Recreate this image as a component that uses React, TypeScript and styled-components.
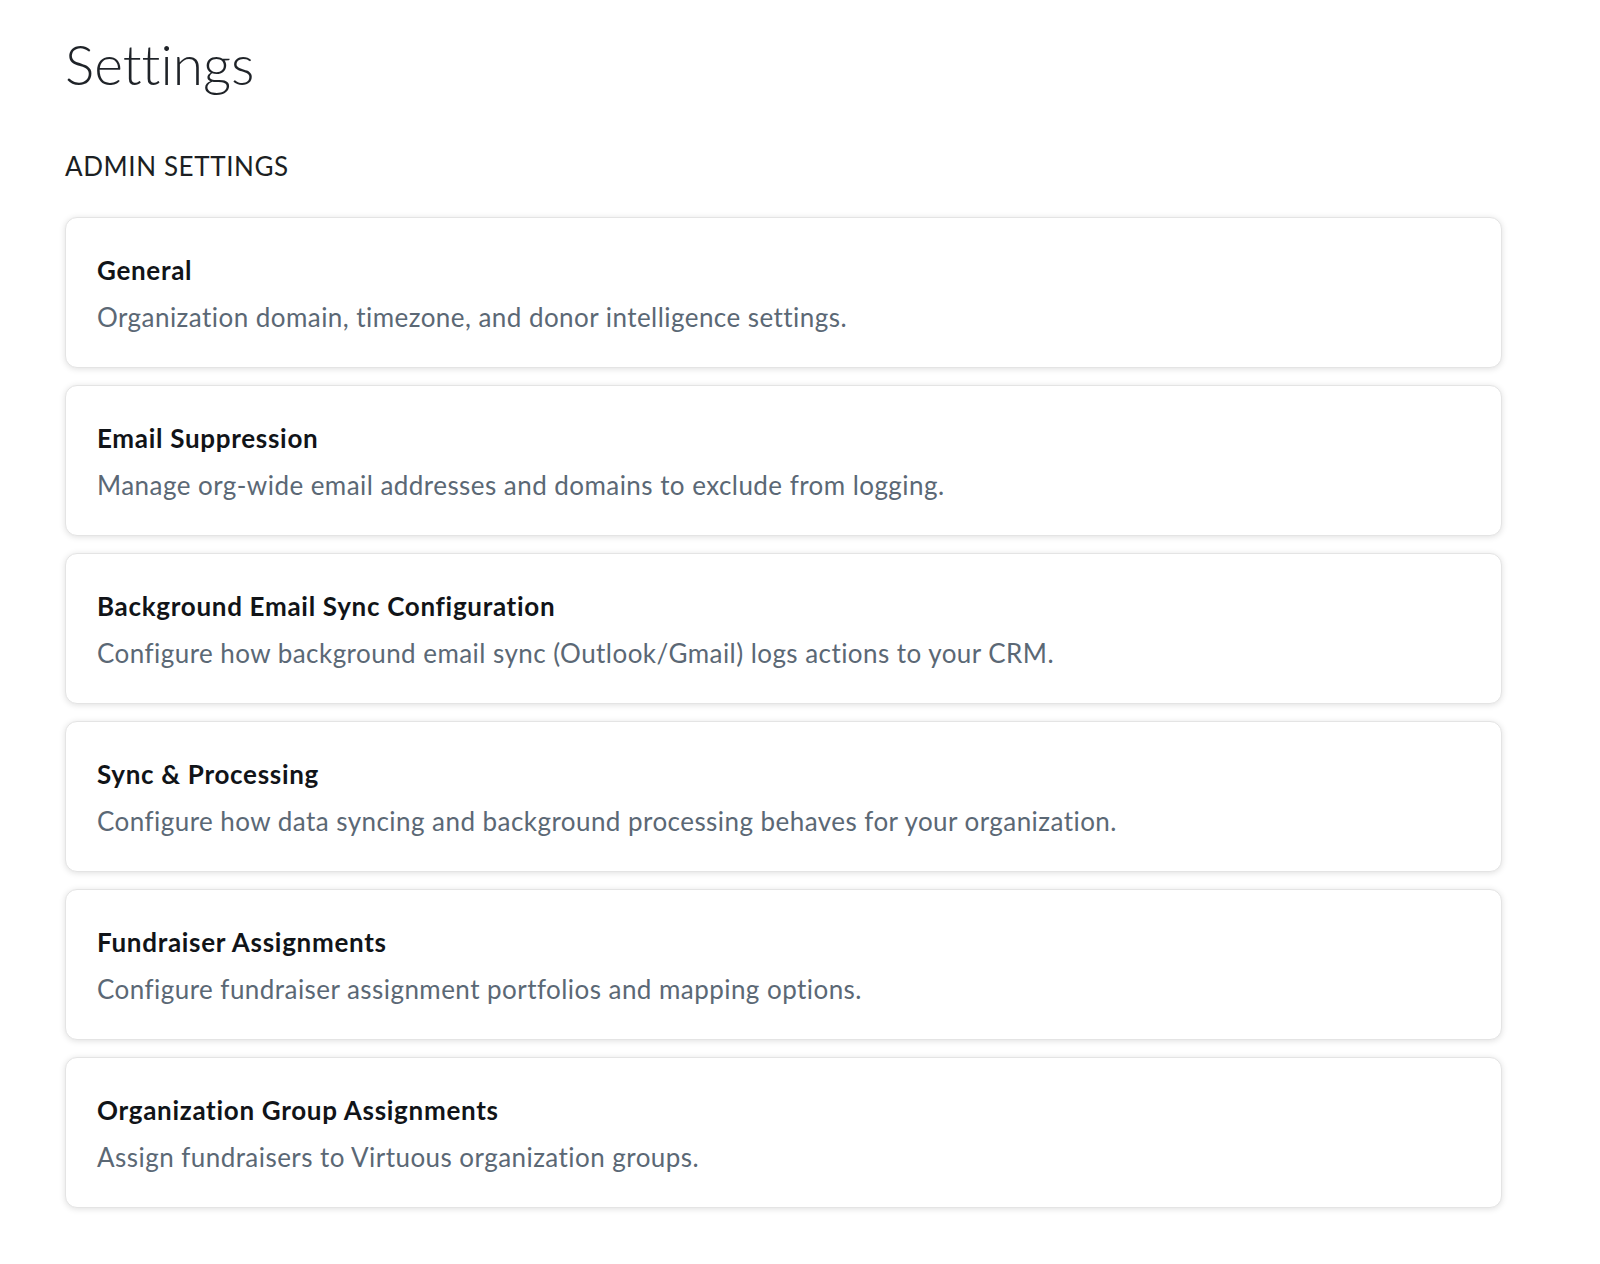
import styled, { createGlobalStyle } from 'styled-components';

const GlobalStyle = createGlobalStyle`
  html, body {
    margin: 0;
    padding: 0;
    background: #ffffff;
    font-family: Lato, "Noto Sans", sans-serif;
    font-variant-ligatures: none;
  }
`

const Page = styled.main`
  padding: 26px 98px 40px 65px;
  display: flex;
  flex-direction: column;
`
const Title = styled.h1`
  margin: 0;
  font-size: 55px;
  font-weight: 300;
  line-height: 76px;
  color: #1f2328;
`
const SectionLabel = styled.h2`
  margin: 48px 0 0;
  font-size: 26px;
  font-weight: 400;
  line-height: 32px;
  color: #1c1f23;
  letter-spacing: 0.6px;
`
const CardList = styled.div`
  display: flex;
  flex-direction: column;
  gap: 17px;
  margin-top: 35px;
`
const Card = styled.a`
  display: flex;
  flex-direction: column;
  gap: 11px;
  height: 151px;
  box-sizing: border-box;
  padding: 34px 31px 0;
  background: #ffffff;
  border: 1px solid #e4e4e4;
  border-radius: 12px;
  box-shadow: 0 1px 6px rgba(0, 0, 0, 0.13);
  text-decoration: none;
  cursor: pointer;
`
const CardTitle = styled.div`
  font-size: 26px;
  font-weight: 700;
  line-height: 36px;
  letter-spacing: 0.7px;
  color: #111418;
`
const CardText = styled.div`
  font-size: 26px;
  font-weight: 400;
  line-height: 36px;
  letter-spacing: 0.45px;
  color: #5b6875;
`

const items = [
  { title: 'General', text: 'Organization domain, timezone, and donor intelligence settings.' },
  { title: 'Email Suppression', text: 'Manage org-wide email addresses and domains to exclude from logging.' },
  { title: 'Background Email Sync Configuration', text: 'Configure how background email sync (Outlook/Gmail) logs actions to your CRM.' },
  { title: 'Sync & Processing', text: 'Configure how data syncing and background processing behaves for your organization.' },
  { title: 'Fundraiser Assignments', text: 'Configure fundraiser assignment portfolios and mapping options.' },
  { title: 'Organization Group Assignments', text: 'Assign fundraisers to Virtuous organization groups.' },
]

const App = () => {
  return (
    <>
      <GlobalStyle />
      <Page>
        <Title>Settings</Title>
        <SectionLabel>ADMIN SETTINGS</SectionLabel>
        <CardList>
          {items.map(item => (
            <Card key={item.title}>
              <CardTitle>{item.title}</CardTitle>
              <CardText>{item.text}</CardText>
            </Card>
          ))}
        </CardList>
      </Page>
    </>
  )
}

export default App
